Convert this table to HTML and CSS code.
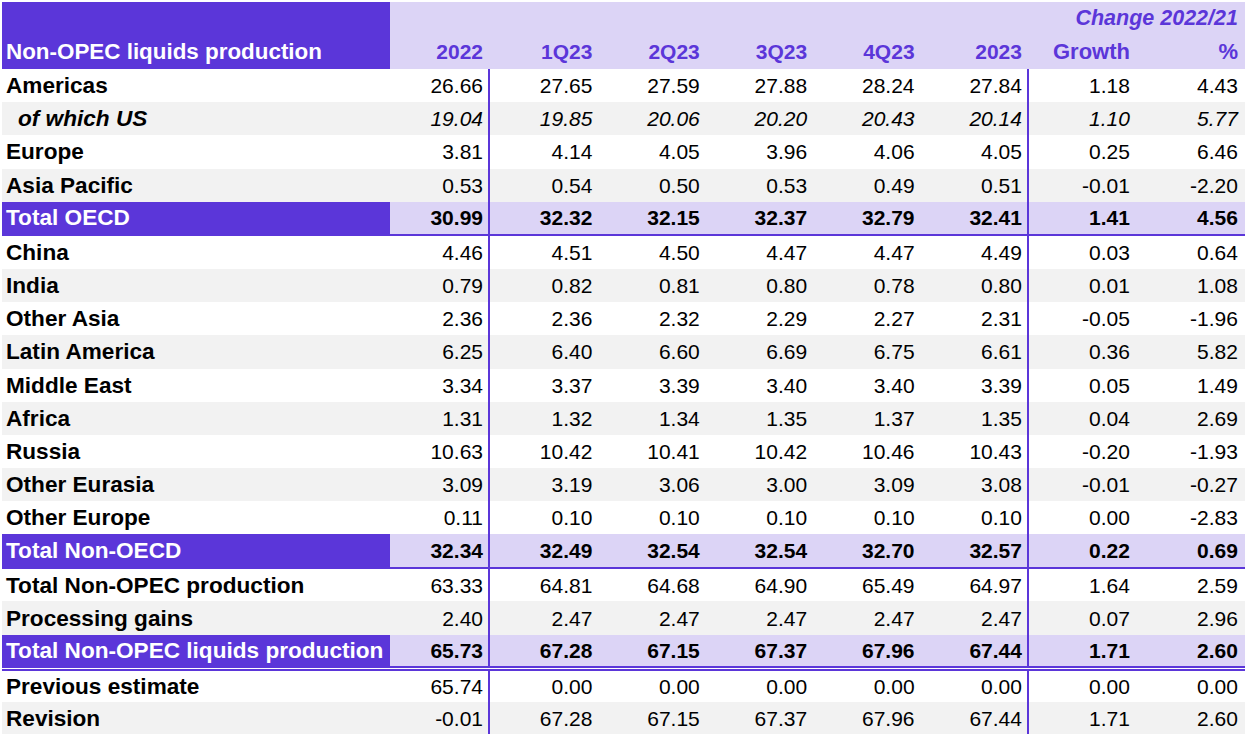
FILE: index.html
```html
<!DOCTYPE html>
<html lang="en">
<head>
<meta charset="utf-8">
<title>Non-OPEC liquids production</title>
<link rel="stylesheet" href="styles.css">
</head>
<body>
<div class="sheet">
  <div class="cols head">
    <div class="title">Non-OPEC liquids production</div>
    <div class="change">Change 2022/21</div>
    <div class="yr y2022">2022</div>
    <div class="yr">1Q23</div>
    <div class="yr">2Q23</div>
    <div class="yr">3Q23</div>
    <div class="yr">4Q23</div>
    <div class="yr y2023">2023</div>
    <div class="yr g">Growth</div>
    <div class="yr g">%</div>
  </div>

  <div class="cols row"><div class="lbl">Americas</div><div class="c b">26.66</div><div class="c">27.65</div><div class="c">27.59</div><div class="c">27.88</div><div class="c">28.24</div><div class="c b">27.84</div><div class="c g">1.18</div><div class="c g">4.43</div></div>
  <div class="cols row alt it"><div class="lbl sub">of which US</div><div class="c b">19.04</div><div class="c">19.85</div><div class="c">20.06</div><div class="c">20.20</div><div class="c">20.43</div><div class="c b">20.14</div><div class="c g">1.10</div><div class="c g">5.77</div></div>
  <div class="cols row"><div class="lbl">Europe</div><div class="c b">3.81</div><div class="c">4.14</div><div class="c">4.05</div><div class="c">3.96</div><div class="c">4.06</div><div class="c b">4.05</div><div class="c g">0.25</div><div class="c g">6.46</div></div>
  <div class="cols row alt"><div class="lbl">Asia Pacific</div><div class="c b">0.53</div><div class="c">0.54</div><div class="c">0.50</div><div class="c">0.53</div><div class="c">0.49</div><div class="c b">0.51</div><div class="c g">-0.01</div><div class="c g">-2.20</div></div>
  <div class="cols row total t-oecd"><div class="lbl">Total OECD</div><div class="c b">30.99</div><div class="c">32.32</div><div class="c">32.15</div><div class="c">32.37</div><div class="c">32.79</div><div class="c b">32.41</div><div class="c g">1.41</div><div class="c g">4.56</div></div>

  <div class="cols row"><div class="lbl">China</div><div class="c b">4.46</div><div class="c">4.51</div><div class="c">4.50</div><div class="c">4.47</div><div class="c">4.47</div><div class="c b">4.49</div><div class="c g">0.03</div><div class="c g">0.64</div></div>
  <div class="cols row alt"><div class="lbl">India</div><div class="c b">0.79</div><div class="c">0.82</div><div class="c">0.81</div><div class="c">0.80</div><div class="c">0.78</div><div class="c b">0.80</div><div class="c g">0.01</div><div class="c g">1.08</div></div>
  <div class="cols row"><div class="lbl">Other Asia</div><div class="c b">2.36</div><div class="c">2.36</div><div class="c">2.32</div><div class="c">2.29</div><div class="c">2.27</div><div class="c b">2.31</div><div class="c g">-0.05</div><div class="c g">-1.96</div></div>
  <div class="cols row alt"><div class="lbl">Latin America</div><div class="c b">6.25</div><div class="c">6.40</div><div class="c">6.60</div><div class="c">6.69</div><div class="c">6.75</div><div class="c b">6.61</div><div class="c g">0.36</div><div class="c g">5.82</div></div>
  <div class="cols row"><div class="lbl">Middle East</div><div class="c b">3.34</div><div class="c">3.37</div><div class="c">3.39</div><div class="c">3.40</div><div class="c">3.40</div><div class="c b">3.39</div><div class="c g">0.05</div><div class="c g">1.49</div></div>
  <div class="cols row alt"><div class="lbl">Africa</div><div class="c b">1.31</div><div class="c">1.32</div><div class="c">1.34</div><div class="c">1.35</div><div class="c">1.37</div><div class="c b">1.35</div><div class="c g">0.04</div><div class="c g">2.69</div></div>
  <div class="cols row"><div class="lbl">Russia</div><div class="c b">10.63</div><div class="c">10.42</div><div class="c">10.41</div><div class="c">10.42</div><div class="c">10.46</div><div class="c b">10.43</div><div class="c g">-0.20</div><div class="c g">-1.93</div></div>
  <div class="cols row alt"><div class="lbl">Other Eurasia</div><div class="c b">3.09</div><div class="c">3.19</div><div class="c">3.06</div><div class="c">3.00</div><div class="c">3.09</div><div class="c b">3.08</div><div class="c g">-0.01</div><div class="c g">-0.27</div></div>
  <div class="cols row"><div class="lbl">Other Europe</div><div class="c b">0.11</div><div class="c">0.10</div><div class="c">0.10</div><div class="c">0.10</div><div class="c">0.10</div><div class="c b">0.10</div><div class="c g">0.00</div><div class="c g">-2.83</div></div>
  <div class="cols row total t-non"><div class="lbl">Total Non-OECD</div><div class="c b">32.34</div><div class="c">32.49</div><div class="c">32.54</div><div class="c">32.54</div><div class="c">32.70</div><div class="c b">32.57</div><div class="c g">0.22</div><div class="c g">0.69</div></div>

  <div class="cols row short"><div class="lbl">Total Non-OPEC production</div><div class="c b">63.33</div><div class="c">64.81</div><div class="c">64.68</div><div class="c">64.90</div><div class="c">65.49</div><div class="c b">64.97</div><div class="c g">1.64</div><div class="c g">2.59</div></div>
  <div class="cols row alt"><div class="lbl">Processing gains</div><div class="c b">2.40</div><div class="c">2.47</div><div class="c">2.47</div><div class="c">2.47</div><div class="c">2.47</div><div class="c b">2.47</div><div class="c g">0.07</div><div class="c g">2.96</div></div>
  <div class="cols row total t-liq"><div class="lbl">Total Non-OPEC liquids production</div><div class="c b">65.73</div><div class="c">67.28</div><div class="c">67.15</div><div class="c">67.37</div><div class="c">67.96</div><div class="c b">67.44</div><div class="c g">1.71</div><div class="c g">2.60</div></div>

  <div class="cols row shorter"><div class="lbl">Previous estimate</div><div class="c b">65.74</div><div class="c">0.00</div><div class="c">0.00</div><div class="c">0.00</div><div class="c">0.00</div><div class="c b">0.00</div><div class="c g">0.00</div><div class="c g">0.00</div></div>
  <div class="cols row alt"><div class="lbl">Revision</div><div class="c b">-0.01</div><div class="c">67.28</div><div class="c">67.15</div><div class="c">67.37</div><div class="c">67.96</div><div class="c b">67.44</div><div class="c g">1.71</div><div class="c g">2.60</div></div>
</div>
</body>
</html>
```

FILE: styles.css
```css
* {
  box-sizing: border-box;
}

html, body {
  margin: 0;
  padding: 0;
  background: #ffffff;
}

.sheet {
  margin: 2px 0 0 2px;
  width: 1243px;
  font-family: "Liberation Sans", Arial, sans-serif;
  color: #000000;
}

.cols {
  display: grid;
  grid-template-columns: 388px 100px 107.4px 107.4px 107.4px 107.4px 109.4px 108px 108px;
}

/* Header */
.head {
  grid-template-rows: 33px 34px;
  background: #dcd4f6;
  color: #5b36d9;
  font-weight: bold;
  font-size: 21px;
}

.head .title {
  grid-row: 1 / 3;
  grid-column: 1;
  background: #5b36d9;
  color: #ffffff;
  font-size: 22.4px;
  line-height: 34px;
  padding-left: 4px;
  display: flex;
  align-items: flex-end;
  white-space: nowrap;
}

.head .change {
  grid-row: 1;
  grid-column: 8 / 10;
  text-align: right;
  font-style: italic;
  line-height: 33px;
  padding-right: 7px;
  font-size: 21.5px;
}

.head .yr {
  grid-row: 2;
  line-height: 34px;
  text-align: right;
  padding-right: 5px;
  white-space: nowrap;
}

.head .y2022,
.head .y2023 {
  padding-right: 7px;
}

.head .g {
  font-size: 22px;
  padding-right: 7px;
}

/* Body rows */
.row {
  height: 33.2px;
  background: #ffffff;
}

.row.short {
  height: 32px;
}

.row.shorter {
  height: 31px;
}

.row.alt {
  background: #f2f2f2;
}

.row > div {
  display: flex;
  align-items: center;
  white-space: nowrap;
  padding-top: 1px;
}

.row .lbl {
  justify-content: flex-start;
  padding-left: 4px;
  font-size: 22.6px;
  font-weight: bold;
}

.row .lbl.sub {
  padding-left: 16px;
  font-style: italic;
}

.row .c {
  justify-content: flex-end;
  padding-right: 5px;
  font-size: 21px;
}

.row .c.b {
  border-right: 2px solid #5b36d9;
}

.row .c.g {
  padding-right: 7px;
}

.row.it .c {
  font-style: italic;
}

/* Totals */
.row.total .lbl {
  background: #5b36d9;
  color: #ffffff;
}

.row.total .c {
  background: #dcd4f6;
  font-weight: bold;
}

.row.t-oecd {
  height: 34px;
  border-bottom: 2px solid #5b36d9;
}

.row.t-non {
  height: 35px;
  border-bottom: 2px solid #5b36d9;
}

.row.t-liq {
  height: 36px;
  border-bottom: 5px double #5b36d9;
}
```
